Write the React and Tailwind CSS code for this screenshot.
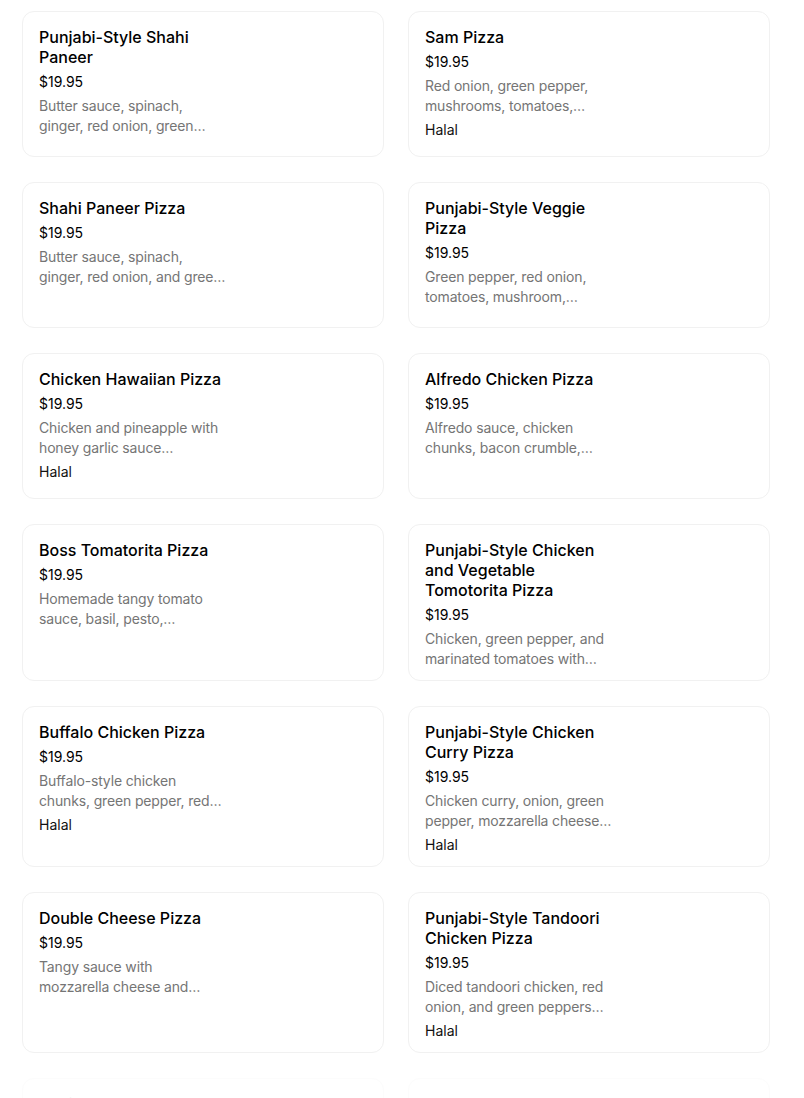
const items = [
  {
    name: "Punjabi-Style Shahi Paneer",
    desc: ["Butter sauce, spinach,", "ginger, red onion, green…"],
  },
  {
    name: "Sam Pizza",
    desc: ["Red onion, green pepper,", "mushrooms, tomatoes,…"],
    halal: true,
  },
  {
    name: "Shahi Paneer Pizza",
    desc: ["Butter sauce, spinach,", "ginger, red onion, and gree…"],
  },
  {
    name: "Punjabi-Style Veggie Pizza",
    desc: ["Green pepper, red onion,", "tomatoes, mushroom,…"],
  },
  {
    name: "Chicken Hawaiian Pizza",
    desc: ["Chicken and pineapple with", "honey garlic sauce…"],
    halal: true,
  },
  {
    name: "Alfredo Chicken Pizza",
    desc: ["Alfredo sauce, chicken", "chunks, bacon crumble,…"],
  },
  {
    name: "Boss Tomatorita Pizza",
    desc: ["Homemade tangy tomato", "sauce, basil, pesto,…"],
  },
  {
    name: "Punjabi-Style Chicken and Vegetable Tomotorita Pizza",
    desc: ["Chicken, green pepper, and", "marinated tomatoes with…"],
  },
  {
    name: "Buffalo Chicken Pizza",
    desc: ["Buffalo-style chicken", "chunks, green pepper, red…"],
    halal: true,
  },
  {
    name: "Punjabi-Style Chicken Curry Pizza",
    desc: ["Chicken curry, onion, green", "pepper, mozzarella cheese…"],
    halal: true,
  },
  {
    name: "Double Cheese Pizza",
    desc: ["Tangy sauce with", "mozzarella cheese and…"],
  },
  {
    name: "Punjabi-Style Tandoori Chicken Pizza",
    desc: ["Diced tandoori chicken, red", "onion, and green peppers…"],
    halal: true,
  },
];

// last row, cut off and fading out at the bottom
const faded = [
  { name: "Punjabi-Style Butter Chicken Pizza", desc: ["Butter chicken sauce", "and onion…"] },
  { name: "Tandoori Paneer Pizza", desc: ["Paneer and onion", "with sauce…"] },
];

function Card({ item, className = "" }) {
  return (
    <div
      className={
        "flex min-h-[146px] rounded-xl border border-[#f1f1f1] bg-white pt-[15px] pb-[11px] px-4 " +
        className
      }
    >
      <div className="flex w-[186px] flex-col gap-1">
        <div className="mb-px text-[16px] font-medium leading-5 text-black">
          {item.name}
        </div>
        <div className="text-[14px] leading-5 text-black">$19.95</div>
        <div className="text-[14px] leading-5 tracking-[-0.15px] whitespace-nowrap text-[#757575]">
          <div>{item.desc[0]}</div>
          <div>{item.desc[1]}</div>
        </div>
        {item.halal && (
          <div className="text-[14px] leading-5 text-[#111111]">Halal</div>
        )}
      </div>
    </div>
  );
}

export default function App() {
  return (
    <div
      className="min-h-[1098px] overflow-hidden bg-white pl-[22px] pt-[11px]"
      style={{ fontFamily: "Inter, 'Noto Sans', sans-serif" }}
    >
      <div className="grid w-[748px] grid-cols-2 gap-x-6 gap-y-[25px]">
        {items.map((item) => (
          <Card key={item.name} item={item} />
        ))}
        {faded.map((item) => (
          <Card key={item.name} item={item} className="opacity-20" />
        ))}
      </div>
    </div>
  );
}
